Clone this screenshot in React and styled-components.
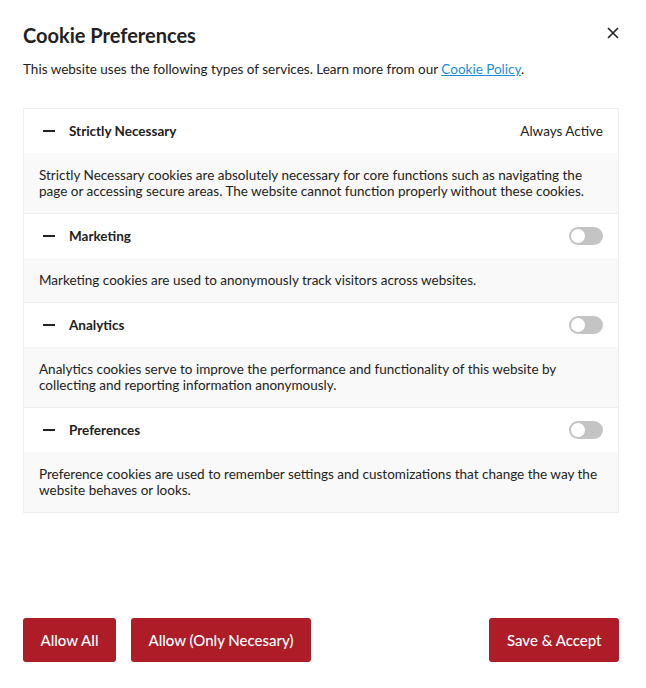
import styled, { createGlobalStyle } from 'styled-components';

const GlobalStyle = createGlobalStyle`
  * {
    box-sizing: border-box;
  }

  body {
    margin: 0;
    background: #fff;
    font-family: Lato, "Open Sans", sans-serif;
    color: #222;
  }
`;

const Modal = styled.div`
  display: flex;
  flex-direction: column;
  width: 646px;
  height: 688px;
  padding: 22px 27px 26px 23px;
`;

const Header = styled.div`
  display: flex;
  justify-content: space-between;
  align-items: flex-start;
  padding-top: 1px;

  h1 {
    margin: 0;
    font-size: 20px;
    font-weight: 700;
    line-height: 24px;
    color: #222;
  }
`;

const CloseButton = styled.button`
  display: flex;
  align-items: center;
  justify-content: center;
  width: 16px;
  height: 16px;
  margin-top: 2px;
  margin-right: -2px;
  padding: 0;
  border: none;
  background: none;
  cursor: pointer;
`;

const Intro = styled.p`
  margin: 13px 0 30px;
  font-size: 13.5px;
  line-height: 18px;
  color: #222;

  a {
    color: #1a8fe0;
    text-decoration: underline;
  }
`;

const ServiceList = styled.div`
  border: 1px solid #eeeeee;
`;

const ServiceHeader = styled.div`
  display: flex;
  align-items: center;
  height: 44px;
  padding: 0 15px 0 19px;
  background: #fff;
  border-top: ${(props) => (props.first ? 'none' : '1px solid #eeeeee')};
  box-sizing: content-box;
`;

const Dash = styled.span`
  width: 12px;
  height: 2px;
  margin-right: 14px;
  background: #222;
`;

const ServiceName = styled.span`
  flex: 1;
  font-size: 13.5px;
  font-weight: 700;
  color: #222;
`;

const AlwaysActive = styled.span`
  font-size: 13.5px;
  color: #222;
`;

const Toggle = styled.span`
  position: relative;
  width: 34px;
  height: 18px;
  border-radius: 9px;
  background: #c4c4c4;

  &::after {
    content: '';
    position: absolute;
    top: 2px;
    left: 2px;
    width: 14px;
    height: 14px;
    border-radius: 50%;
    background: #fff;
  }
`;

const ServiceBody = styled.p`
  margin: 0;
  padding: 14px 15px;
  background: #f9f9f9;
  font-size: 13.5px;
  line-height: 16px;
  color: #222;
`;

const Footer = styled.div`
  display: flex;
  align-items: center;
  gap: 15px;
  margin-top: auto;
`;

const ActionButton = styled.button`
  height: 44px;
  padding: 0 17.5px;
  border: none;
  border-radius: 3px;
  background: #ae1c28;
  color: #fff;
  font-family: Lato, "Open Sans", sans-serif;
  font-size: 15px;
  font-weight: 500;
  cursor: pointer;
  margin-left: ${(props) => (props.push ? 'auto' : '0')};
`;

const services = [
  {
    name: 'Strictly Necessary',
    required: true,
    text: 'Strictly Necessary cookies are absolutely necessary for core functions such as navigating the page or accessing secure areas. The website cannot function properly without these cookies.',
  },
  {
    name: 'Marketing',
    text: 'Marketing cookies are used to anonymously track visitors across websites.',
  },
  {
    name: 'Analytics',
    text: 'Analytics cookies serve to improve the performance and functionality of this website by collecting and reporting information anonymously.',
  },
  {
    name: 'Preferences',
    text: 'Preference cookies are used to remember settings and customizations that change the way the website behaves or looks.',
  },
];

export default function App() {
  return (
    <>
      <GlobalStyle />
      <Modal>
        <Header>
          <h1>Cookie Preferences</h1>
          <CloseButton type="button" aria-label="Close">
            <svg width="12" height="12" viewBox="0 0 12 12">
              <path d="M1 1 L11 11 M11 1 L1 11" stroke="#222" strokeWidth="1.6" />
            </svg>
          </CloseButton>
        </Header>
        <Intro>
          This website uses the following types of services. Learn more from our
          {' '}
          <a href="#policy">Cookie Policy</a>
          .
        </Intro>
        <ServiceList>
          {services.map((service, index) => (
            <div key={service.name}>
              <ServiceHeader first={index === 0}>
                <Dash />
                <ServiceName>{service.name}</ServiceName>
                {service.required ? <AlwaysActive>Always Active</AlwaysActive> : <Toggle />}
              </ServiceHeader>
              <ServiceBody>{service.text}</ServiceBody>
            </div>
          ))}
        </ServiceList>
        <Footer>
          <ActionButton type="button">Allow All</ActionButton>
          <ActionButton type="button">Allow (Only Necesary)</ActionButton>
          <ActionButton type="button" push>Save &amp; Accept</ActionButton>
        </Footer>
      </Modal>
    </>
  );
}
